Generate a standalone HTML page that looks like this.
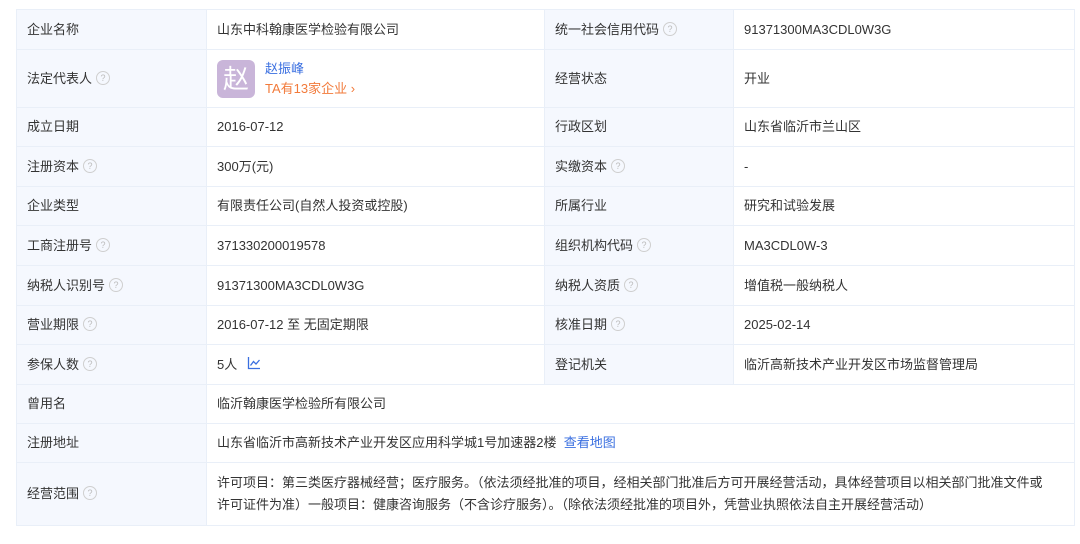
<!DOCTYPE html>
<html><head><meta charset="utf-8"><style>
body{margin:0;background:#fff;width:1080px;height:544px;overflow:hidden;font-family:"Liberation Sans","Noto Sans CJK SC",sans-serif;font-size:13px;color:#333}
table{position:absolute;left:16px;top:9px;border-collapse:collapse;table-layout:fixed;width:1058px}
td{border:1px solid #e9eff8;padding:0 0 0 10px;vertical-align:middle;line-height:20px}
td.l{background:#f5f8fe;}
.q{display:inline-block;width:12px;height:12px;border:1px solid #cfcfcf;border-radius:50%;color:#bbb;font-size:9px;line-height:12px;text-align:center;vertical-align:middle;margin-left:4px;margin-top:-3px}
a{color:#3a6fe0;text-decoration:none}
</style></head><body>
<table>
<colgroup><col style="width:190px"><col style="width:338px"><col style="width:189px"><col style="width:341px"></colgroup>
<tr style="height:40px"><td class="l">企业名称</td><td>山东中科翰康医学检验有限公司</td><td class="l">统一社会信用代码<span class="q">?</span></td><td>91371300MA3CDL0W3G</td></tr>
<tr style="height:58px"><td class="l">法定代表人<span class="q">?</span></td><td><div style="display:flex;align-items:center"><div style="width:38px;height:38px;border-radius:6px;background:#c9b5d9;color:#fff;font-size:26px;line-height:38px;text-align:center;margin-right:10px">赵</div><div><a style="display:block">赵振峰</a><span style="color:#f27a3a">TA有13家企业 ›</span></div></div></td><td class="l">经营状态</td><td>开业</td></tr>
<tr style="height:39px"><td class="l">成立日期</td><td>2016-07-12</td><td class="l">行政区划</td><td>山东省临沂市兰山区</td></tr>
<tr style="height:40px"><td class="l">注册资本<span class="q">?</span></td><td>300万(元)</td><td class="l">实缴资本<span class="q">?</span></td><td>-</td></tr>
<tr style="height:39px"><td class="l">企业类型</td><td>有限责任公司(自然人投资或控股)</td><td class="l">所属行业</td><td>研究和试验发展</td></tr>
<tr style="height:40px"><td class="l">工商注册号<span class="q">?</span></td><td>371330200019578</td><td class="l">组织机构代码<span class="q">?</span></td><td>MA3CDL0W-3</td></tr>
<tr style="height:40px"><td class="l">纳税人识别号<span class="q">?</span></td><td>91371300MA3CDL0W3G</td><td class="l">纳税人资质<span class="q">?</span></td><td>增值税一般纳税人</td></tr>
<tr style="height:39px"><td class="l">营业期限<span class="q">?</span></td><td>2016-07-12 至 无固定期限</td><td class="l">核准日期<span class="q">?</span></td><td>2025-02-14</td></tr>
<tr style="height:40px"><td class="l">参保人数<span class="q">?</span></td><td>5人 <svg width="14" height="14" viewBox="0 0 14 14" style="margin-left:6px;vertical-align:-1px"><path d="M1.5 1v11.5H13M3.5 9.5l3-4 2.5 2.5 3.5-4" fill="none" stroke="#3a6fe0" stroke-width="1.3"/></svg></td><td class="l">登记机关</td><td>临沂高新技术产业开发区市场监督管理局</td></tr>
<tr style="height:39px"><td class="l">曾用名</td><td colspan="3">临沂翰康医学检验所有限公司</td></tr>
<tr style="height:39px"><td class="l">注册地址</td><td colspan="3">山东省临沂市高新技术产业开发区应用科学城1号加速器2楼 &nbsp;<a>查看地图</a></td></tr>
<tr style="height:63px"><td class="l">经营范围<span class="q">?</span></td><td colspan="3" style="line-height:22px;padding-right:24px">许可项目：第三类医疗器械经营；医疗服务。（依法须经批准的项目，经相关部门批准后方可开展经营活动，具体经营项目以相关部门批准文件或许可证件为准）一般项目：健康咨询服务（不含诊疗服务）。（除依法须经批准的项目外，凭营业执照依法自主开展经营活动）</td></tr>
</table>
</body></html>
